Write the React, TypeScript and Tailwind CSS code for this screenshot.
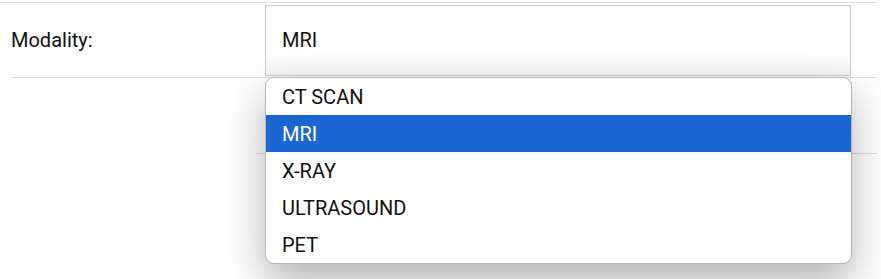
import { useState } from "react";

const options = ["CT SCAN", "MRI", "X-RAY", "ULTRASOUND", "PET"];

export default function App() {
  const [selected, setSelected] = useState("MRI");

  return (
    <div className="relative w-[881px] h-[279px] overflow-hidden bg-white font-['Roboto',sans-serif] text-[20px] text-[#111]">
      <div className="mt-[2px] w-[877px] border-t border-[#dedede]">
        <div className="flex h-[74px] items-center">
          <label className="w-[265px] pl-[11px]">Modality:</label>
          <div className="flex h-[71px] w-[586px] items-center border border-[#cacaca] bg-gradient-to-b from-white from-70% to-[#f4f4f4] pl-[16px]">
            {selected}
          </div>
        </div>
      </div>
      <div className="ml-[11px] w-[866px] border-t border-[#dedede]" />
      <div className="ml-[11px] mt-[75px] w-[866px] border-t border-[#dedede]" />

      {/* native-looking option list */}
      <ul className="absolute left-[265px] top-[77px] z-10 w-[587px] overflow-hidden rounded-[9px] border border-[#b4b4b4] bg-white shadow-[0_18px_40px_rgba(0,0,0,0.3)]">
        {options.map((option) => (
          <li
            key={option}
            onClick={() => setSelected(option)}
            className={
              option === selected
                ? "flex h-[37px] items-center bg-[#1a67d3] pl-[16px] text-white"
                : "flex h-[37px] items-center pl-[16px]"
            }
          >
            {option}
          </li>
        ))}
      </ul>
      <div className="absolute left-0 top-[100px] z-[5] h-[166px] w-[256px] rounded-br-[18px] bg-white" />
    </div>
  );
}
